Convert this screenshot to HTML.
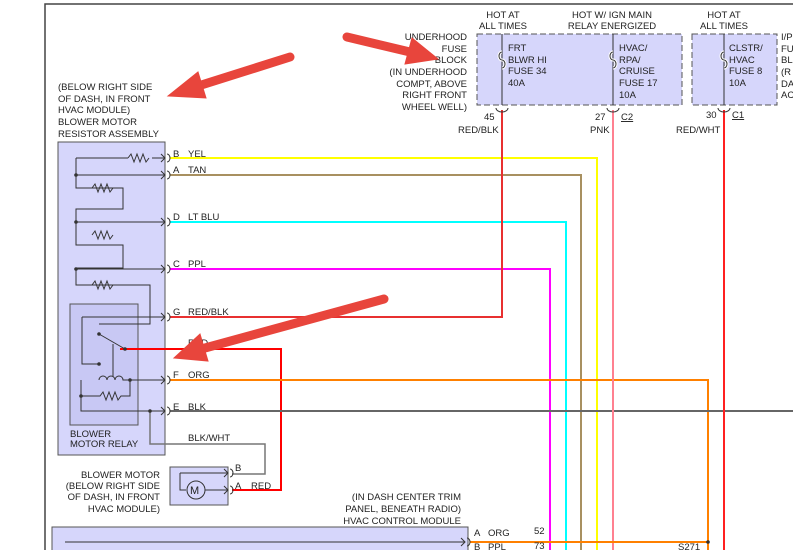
<!DOCTYPE html>
<html><head><meta charset="utf-8"><style>
html,body{margin:0;padding:0;background:#fff;overflow:hidden}
svg{display:block}
text{font-family:"Liberation Sans",Arial,sans-serif;font-size:9.5px;fill:#222}
</style></head><body>
<svg width="793" height="550" viewBox="0 0 793 550" xmlns="http://www.w3.org/2000/svg">
<path d="M45 550V4H793" fill="none" stroke="#444" stroke-width="1.5"/>
<rect x="58" y="142" width="107" height="313" fill="#d6d6fb" stroke="#555"/>
<rect x="70" y="304" width="68" height="121" fill="#c8c8f4" stroke="#555"/>
<rect x="477" y="34" width="205" height="71" fill="#d6d6fb" stroke="#555" stroke-dasharray="6,3"/>
<rect x="692" y="34" width="85" height="71" fill="#d6d6fb" stroke="#555" stroke-dasharray="6,3"/>
<rect x="170" y="467" width="58" height="38" fill="#d6d6fb" stroke="#555"/>
<rect x="52" y="527" width="416" height="30" fill="#d6d6fb" stroke="#555"/>
<g fill="none" stroke-width="2">
<path d="M170 158H597V550" stroke="#ffff00"/>
<path d="M170 175H581V550" stroke="#a89060"/>
<path d="M170 222H566V550" stroke="#00ffff"/>
<path d="M170 269H550V550" stroke="#ff00ff"/>
<path d="M170 317H502V110" stroke="#e83030"/>
<path d="M120 349H281V490H232" stroke="#ff0000"/>
<path d="M170 380H708V550" stroke="#ff8000"/>
<path d="M170 411H793" stroke="#666"/>
<path d="M150 411V444H265V474H232" stroke="#777" stroke-width="1.5"/>
<path d="M613 110V550" stroke="#ff8090"/>
<path d="M724 110V550" stroke="#ff2020"/>
<path d="M470 542H708" stroke="#ff8000"/>
</g>
<g fill="none" stroke="#333" stroke-width="1">
<path d="M76 158V188H123V209H76V222V245H123V268H76V269V285H150V324H99M76 175H165M76 222H165M76 269H165M76 158H128M152 158H165"/>
<path d="M128 158l3-4 3 8 3-8 3 8 3-8 3 8 3-4"/>
<path d="M92 188l3-4 3 8 3-8 3 8 3-8 3 8 3-4 M92 235l3-4 3 8 3-8 3 8 3-8 3 8 3-4 M92 285l3-4 3 8 3-8 3 8 3-8 3 8 3-4"/>
<path d="M82 317H165M82 317V364H99M99 334L125 349M113 344V377"/>
<path d="M81 380V411H165M81 396H100l3-4 3 8 3-8 3 8 3-8 3 8 3-4H130V380M99 380a4 4 0 0 1 8 0a4 4 0 0 1 8 0a4 4 0 0 1 8 0H165"/>
<path d="M180 473H228M180 473V490H186M205 490H228"/>
<circle cx="196" cy="490" r="9"/>
<path d="M65 542H465"/>
<path d="M502 34V105M613 34V105M724 34V105"/>
<path d="M161 154l4 4-4 4M161 171l4 4-4 4M161 218l4 4-4 4M161 265l4 4-4 4M161 313l4 4-4 4M161 376l4 4-4 4M161 407l4 4-4 4M224 469l4 4-4 4M224 486l4 4-4 4M461 538l4 4-4 4"/>
<path d="M167 154a3 4 0 0 1 0 8M167 171a3 4 0 0 1 0 8M167 218a3 4 0 0 1 0 8M167 265a3 4 0 0 1 0 8M167 313a3 4 0 0 1 0 8M167 376a3 4 0 0 1 0 8M167 407a3 4 0 0 1 0 8M230 469a3 4 0 0 1 0 8M230 486a3 4 0 0 1 0 8M467 538a3 4 0 0 1 0 8"/>
<path d="M496 108a6 4 0 0 0 12 0M607 108a6 4 0 0 0 12 0M718 108a6 4 0 0 0 12 0"/>
<path d="M502 52a3 4 0 0 0 0 8a3 4 0 0 1 0 8M613 52a3 4 0 0 0 0 8a3 4 0 0 1 0 8M724 52a3 4 0 0 0 0 8a3 4 0 0 1 0 8" stroke="#fff" stroke-width="3"/>
<path d="M502 52a3 4 0 0 0 0 8a3 4 0 0 1 0 8M613 52a3 4 0 0 0 0 8a3 4 0 0 1 0 8M724 52a3 4 0 0 0 0 8a3 4 0 0 1 0 8"/>
</g>
<g fill="#333"><circle cx="76" cy="175" r="1.8"/><circle cx="76" cy="222" r="1.8"/><circle cx="76" cy="269" r="1.8"/><circle cx="99" cy="334" r="1.8"/><circle cx="125" cy="349" r="1.8"/><circle cx="99" cy="364" r="1.8"/><circle cx="130" cy="380" r="1.8"/><circle cx="81" cy="396" r="1.8"/><circle cx="150" cy="411" r="1.8"/><circle cx="708" cy="542" r="1.8"/></g>
<text x="190" y="494" style="font-size:11px">M</text>
<g>
<text x="58" y="90">(BELOW RIGHT SIDE</text><text x="58" y="102">OF DASH, IN FRONT</text><text x="58" y="113">HVAC MODULE)</text>
<text x="58" y="125">BLOWER MOTOR</text><text x="58" y="137">RESISTOR ASSEMBLY</text>
<text x="173" y="157">B</text><text x="188" y="157">YEL</text>
<text x="173" y="173">A</text><text x="188" y="173">TAN</text>
<text x="173" y="220">D</text><text x="188" y="220">LT BLU</text>
<text x="173" y="267">C</text><text x="188" y="267">PPL</text>
<text x="173" y="315">G</text><text x="188" y="315">RED/BLK</text>
<text x="188" y="346">RED</text>
<text x="173" y="378">F</text><text x="188" y="378">ORG</text>
<text x="173" y="410">E</text><text x="188" y="410">BLK</text>
<text x="188" y="441">BLK/WHT</text>
<text x="70" y="437">BLOWER</text><text x="70" y="447">MOTOR RELAY</text>
<text x="235" y="471">B</text><text x="235" y="489">A</text><text x="251" y="489">RED</text>
<text x="160" y="478" text-anchor="end">BLOWER MOTOR</text><text x="160" y="489" text-anchor="end">(BELOW RIGHT SIDE</text><text x="160" y="500" text-anchor="end">OF DASH, IN FRONT</text><text x="160" y="512" text-anchor="end">HVAC MODULE)</text>
<text x="461" y="500" text-anchor="end">(IN DASH CENTER TRIM</text><text x="461" y="512" text-anchor="end">PANEL, BENEATH RADIO)</text><text x="461" y="524" text-anchor="end">HVAC CONTROL MODULE</text>
<text x="474" y="536">A</text><text x="488" y="536">ORG</text><text x="534" y="534">52</text>
<text x="474" y="550">B</text><text x="488" y="550">PPL</text><text x="534" y="549">73</text>
<text x="678" y="550">S271</text>
<text x="467" y="40" text-anchor="end">UNDERHOOD</text><text x="467" y="52" text-anchor="end">FUSE</text><text x="467" y="63" text-anchor="end">BLOCK</text><text x="467" y="75" text-anchor="end">(IN UNDERHOOD</text><text x="467" y="87" text-anchor="end">COMPT, ABOVE</text><text x="467" y="98" text-anchor="end">RIGHT FRONT</text><text x="467" y="110" text-anchor="end">WHEEL WELL)</text>
<text x="503" y="18" text-anchor="middle">HOT AT</text><text x="503" y="29" text-anchor="middle">ALL TIMES</text>
<text x="612" y="18" text-anchor="middle">HOT W/ IGN MAIN</text><text x="612" y="29" text-anchor="middle">RELAY ENERGIZED</text>
<text x="724" y="18" text-anchor="middle">HOT AT</text><text x="724" y="29" text-anchor="middle">ALL TIMES</text>
<text x="508" y="51">FRT</text><text x="508" y="63">BLWR HI</text><text x="508" y="74">FUSE 34</text><text x="508" y="86">40A</text>
<text x="619" y="51">HVAC/</text><text x="619" y="63">RPA/</text><text x="619" y="74">CRUISE</text><text x="619" y="86">FUSE 17</text><text x="619" y="98">10A</text>
<text x="729" y="51">CLSTR/</text><text x="729" y="63">HVAC</text><text x="729" y="74">FUSE 8</text><text x="729" y="86">10A</text>
<text x="781" y="40">I/P</text><text x="781" y="52">FU</text><text x="781" y="63">BL</text><text x="781" y="75">(R</text><text x="781" y="87">DA</text><text x="781" y="98">AC</text>
<text x="484" y="120">45</text><text x="458" y="133">RED/BLK</text>
<text x="595" y="120">27</text><text x="621" y="120" text-decoration="underline">C2</text><text x="590" y="133">PNK</text>
<text x="706" y="118">30</text><text x="732" y="118" text-decoration="underline">C1</text><text x="676" y="133">RED/WHT</text>
</g>
<g fill="#e8453c" stroke="#e8453c" stroke-linecap="round">
<path d="M290 57L195 87" stroke-width="9"/><path d="M168 96L198 72L206 98Z"/>
<path d="M347 37L410 52" stroke-width="9"/><path d="M438 59L405 64L412 38Z"/>
<path d="M384 299L205 348" stroke-width="9"/><path d="M174 358L200 334L208 361Z"/>
</g>
</svg>
</body></html>
